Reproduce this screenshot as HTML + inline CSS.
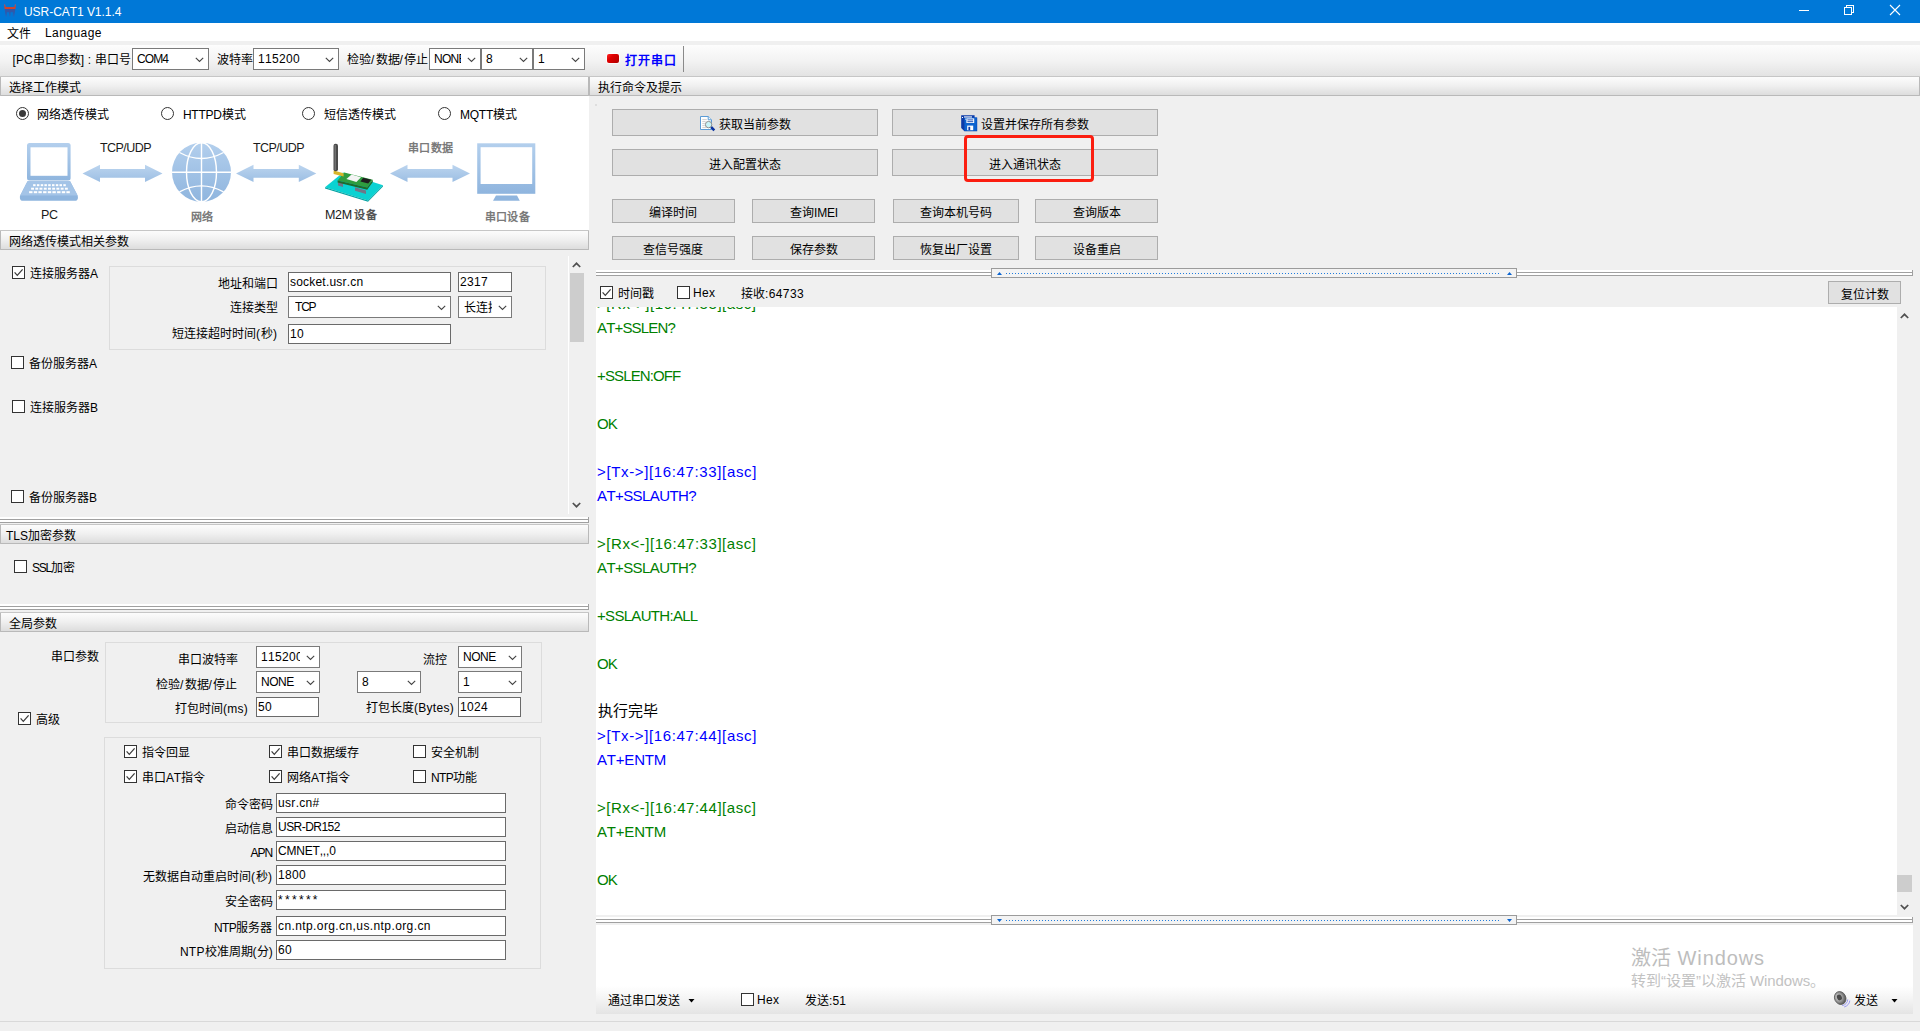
<!DOCTYPE html>
<html lang="zh-CN"><head><meta charset="utf-8"><title>USR-CAT1 V1.1.4</title>
<style>
html,body{margin:0;padding:0}
body{width:1920px;height:1031px;position:relative;overflow:hidden;background:#f0f0f0;
 font-family:"Liberation Sans",sans-serif;font-size:12px;color:#000;font-kerning:none}
body div,body svg{position:absolute;box-sizing:border-box}
.t{white-space:nowrap;overflow:visible}
.hd{height:20px;border:1px solid #b9b9b9;border-top-color:#c6c6c6;border-radius:1px;
 background:linear-gradient(#fcfcfc,#f1f1f1 45%,#dddddd)}
.cb{background:#fff;border:1px solid #7a7a7a;white-space:nowrap;overflow:hidden}
.cb .cv{right:4px;top:50%;margin-top:-2px}
.ct{position:absolute;top:0;bottom:0;overflow:hidden;white-space:nowrap}
.in{background:#fff;border:1px solid #6a6a6a;white-space:nowrap;overflow:hidden;padding-left:1px}
.ck{width:13px;height:13px;background:#fff;border:1px solid #333}
.ck svg{left:0;top:0}
.rd{width:13px;height:13px;border-radius:50%;background:#fff;border:1px solid #333}
.rd i{position:absolute;left:2px;top:2px;width:7px;height:7px;border-radius:50%;background:#3a3a3a}
.bt{background:#e1e1e1;border:1px solid #adadad}
.gp{border:1px solid #dcdcdc;background:#f0f0f0}
.sp{height:6px;background:#fff;border-right:1px solid #a0a0a0}
.sp:before{content:"";position:absolute;left:0;right:0;top:2px;height:1px;background:#a0a0a0}
.sp:after{content:"";position:absolute;left:0;right:0;top:5px;height:1px;background:#a0a0a0}
.log{font-size:15px}
.g{color:#008000}.b{color:#0000ff}
.im{font-size:11px;color:#7a7a7a;font-weight:bold}
.sb{background:#f0f0f0}
.th{background:#cdcdcd}
</style></head><body>

<div class="" style="left:0px;top:0px;width:1920px;height:23px;background:#0078d7"></div>
<svg style="left:0;top:0" width="20" height="20" viewBox="0 0 20 20">
<defs><linearGradient id="ir" x1="0" y1="0" x2="0" y2="1"><stop offset="0" stop-color="#8e5c86"/><stop offset="0.5" stop-color="#cf442e"/><stop offset="1" stop-color="#cd452f"/></linearGradient>
<linearGradient id="ib" x1="0" y1="0" x2="0" y2="1"><stop offset="0" stop-color="#3a55a0"/><stop offset="0.45" stop-color="#2a5bb0"/><stop offset="1" stop-color="#0c74d2"/></linearGradient></defs>
<path d="M4 4.3 Q4.6 4 5.2 4.4 L5.7 6.9 L14.3 6.9 L14.8 4.4 Q15.4 4 16 4.3 L15.4 9.1 L4.6 9.1 Z" fill="url(#ir)"/>
<path d="M4.7 9.1 L15.3 9.1 L14.3 17.4 L12.6 17.4 L12.9 12.2 L10.6 12.2 L10.5 16.8 L9.1 16.8 L9 12.2 L6.9 12.2 L7.2 17.4 L5.5 17.4 Z" fill="url(#ib)"/></svg>
<div class="t" style="left:24px;top:0px;height:24px;line-height:24px;color:#fff;letter-spacing:-0.05px">USR-CAT1 V1.1.4</div>
<svg style="left:1790px;top:0" width="130" height="23" viewBox="1790 0 130 23" shape-rendering="crispEdges">
<rect x="1799" y="10" width="10" height="1" fill="#fff"/>
<path d="M1844.5 7.5h7v7h-7z M1846.5 7.5v-2h7v7h-2" fill="none" stroke="#fff" stroke-width="1"/>
<path d="M1890 5 L1900 15 M1900 5 L1890 15" fill="none" stroke="#fff" stroke-width="1.1" shape-rendering="geometricPrecision"/>
</svg>
<div class="" style="left:0px;top:23px;width:1920px;height:18px;background:#fff"></div>
<div class="t" style="left:7px;top:27px;height:14px;line-height:14px;width:24px;text-align:justify;text-align-last:justify;">文件</div>
<div class="t" style="left:45px;top:26px;height:14px;line-height:14px;letter-spacing:0.45px">Language</div>
<div class="" style="left:0px;top:45px;width:1920px;height:31px;background:linear-gradient(#fdfdfd,#f3f3f3 50%,#e3e3e3)"></div>
<div class="t" style="left:12.5px;top:53px;height:14px;line-height:14px;width:118px;text-align:justify;text-align-last:justify;"><span style="letter-spacing:0.09px">[PC</span>串口参数<span style="letter-spacing:0.09px">] : </span>串口号</div>
<div class="cb " style="left:132px;top:48px;width:77px;height:22px;line-height:20px"><span class="ct" style="left:4px;right:19px;letter-spacing:-0.9px;">COM4</span><svg class="cv" width="9" height="6" viewBox="0 0 9 6"><path d="M0.8 0.8 L4.5 4.5 L8.2 0.8" fill="none" stroke="#444" stroke-width="1.1"/></svg></div>
<div class="t" style="left:217px;top:53px;height:14px;line-height:14px;width:36px;text-align:justify;text-align-last:justify;">波特率</div>
<div class="cb " style="left:253px;top:48px;width:86px;height:22px;line-height:20px"><span class="ct" style="left:4px;right:19px;letter-spacing:0.33px;">115200</span><svg class="cv" width="9" height="6" viewBox="0 0 9 6"><path d="M0.8 0.8 L4.5 4.5 L8.2 0.8" fill="none" stroke="#444" stroke-width="1.1"/></svg></div>
<div class="t" style="left:347px;top:53px;height:14px;line-height:14px;width:81px;text-align:justify;text-align-last:justify;">检验<span style="letter-spacing:1.17px">/</span>数据<span style="letter-spacing:1.17px">/</span>停止</div>
<div class="cb " style="left:429px;top:48px;width:52px;height:22px;line-height:20px"><span class="ct" style="left:4px;right:19px;letter-spacing:-0.7px;">NONE</span><svg class="cv" width="9" height="6" viewBox="0 0 9 6"><path d="M0.8 0.8 L4.5 4.5 L8.2 0.8" fill="none" stroke="#444" stroke-width="1.1"/></svg></div>
<div class="cb " style="left:481px;top:48px;width:52px;height:22px;line-height:20px"><span class="ct" style="left:4px;right:19px;">8</span><svg class="cv" width="9" height="6" viewBox="0 0 9 6"><path d="M0.8 0.8 L4.5 4.5 L8.2 0.8" fill="none" stroke="#444" stroke-width="1.1"/></svg></div>
<div class="cb " style="left:533px;top:48px;width:52px;height:22px;line-height:20px"><span class="ct" style="left:4px;right:19px;">1</span><svg class="cv" width="9" height="6" viewBox="0 0 9 6"><path d="M0.8 0.8 L4.5 4.5 L8.2 0.8" fill="none" stroke="#444" stroke-width="1.1"/></svg></div>
<div class="" style="left:607px;top:54px;width:12px;height:9px;border-radius:2px;background:linear-gradient(135deg,#ff2a2a 0%,#e00000 35%,#b00000 100%);box-shadow:0 0 0 1px rgba(255,255,255,.7)"></div>
<div class="t" style="left:625px;top:54px;height:14px;line-height:14px;width:51px;text-align:justify;text-align-last:justify;color:#0000ff;font-weight:bold">打开串口</div>
<div class="" style="left:683px;top:46px;width:1px;height:26px;background:#8a8a8a"></div>
<div class="hd" style="left:0px;top:76px;width:589px"></div>
<div class="t" style="left:9px;top:81px;height:14px;line-height:14px;width:72px;text-align:justify;text-align-last:justify;">选择工作模式</div>
<div class="hd" style="left:589px;top:76px;width:1331px"></div>
<div class="t" style="left:598px;top:81px;height:14px;line-height:14px;width:84px;text-align:justify;text-align-last:justify;">执行命令及提示</div>
<div class="hd" style="left:0px;top:230px;width:589px"></div>
<div class="t" style="left:9px;top:235px;height:14px;line-height:14px;width:120px;text-align:justify;text-align-last:justify;">网络透传模式相关参数</div>
<div class="hd" style="left:0px;top:524px;width:589px"></div>
<div class="t" style="left:6px;top:529px;height:14px;line-height:14px;">TLS加密参数</div>
<div class="hd" style="left:0px;top:612px;width:589px"></div>
<div class="t" style="left:9px;top:617px;height:14px;line-height:14px;width:48px;text-align:justify;text-align-last:justify;">全局参数</div>
<div class="" style="left:0px;top:96px;width:589px;height:134px;background:#fff"></div>
<div class="rd" style="left:16.0px;top:107.0px"><i></i></div>
<div class="t" style="left:37px;top:108px;height:14px;line-height:14px;width:72px;text-align:justify;text-align-last:justify;">网络透传模式</div>
<div class="rd" style="left:161.0px;top:107.0px"></div>
<div class="t" style="left:183px;top:108px;height:14px;line-height:14px;width:62.5px;text-align:justify;text-align-last:justify;"><span style="letter-spacing:-0.30px">HTTPD</span>模式</div>
<div class="rd" style="left:302.0px;top:107.0px"></div>
<div class="t" style="left:324px;top:108px;height:14px;line-height:14px;width:72px;text-align:justify;text-align-last:justify;">短信透传模式</div>
<div class="rd" style="left:438.0px;top:107.0px"></div>
<div class="t" style="left:460px;top:108px;height:14px;line-height:14px;width:57px;text-align:justify;text-align-last:justify;"><span style="letter-spacing:-0.25px">MQTT</span>模式</div>
<svg style="left:0;top:96px" width="589" height="134" viewBox="0 96 589 134">
<defs>
<linearGradient id="ab" x1="0" y1="0" x2="0" y2="1"><stop offset="0" stop-color="#bcd5ef"/><stop offset="1" stop-color="#9cbee3"/></linearGradient>
<linearGradient id="lb" x1="0" y1="0" x2="0" y2="1"><stop offset="0" stop-color="#b3cfed"/><stop offset="1" stop-color="#8fb5de"/></linearGradient>
</defs>
<rect x="27" y="143" width="43.6" height="37.4" rx="2.5" fill="url(#lb)"/>
<rect x="30.5" y="147.3" width="37" height="28.5" fill="#fff"/>
<path d="M27.5 181.2 L70.1 181.2 L77.6 195.6 Q78.2 197 77.8 198.4 L77.2 200 Q76.8 200.8 75.8 200.8 L22 200.8 Q21 200.8 20.6 200 L20 198.4 Q19.6 197 20.2 195.6 Z" fill="#8fb5de"/>
<path d="M27.5 181.2 L70.1 181.2 L77.6 195.6 L20.2 195.6 Z" fill="#a4c4e7"/>
<rect x="33.1" y="184.2" width="2.5" height="2" fill="#fff"/><rect x="36.9" y="184.2" width="2.5" height="2" fill="#fff"/><rect x="40.7" y="184.2" width="2.5" height="2" fill="#fff"/><rect x="44.4" y="184.2" width="2.5" height="2" fill="#fff"/><rect x="48.2" y="184.2" width="2.5" height="2" fill="#fff"/><rect x="52.0" y="184.2" width="2.5" height="2" fill="#fff"/><rect x="55.8" y="184.2" width="2.5" height="2" fill="#fff"/><rect x="59.5" y="184.2" width="2.5" height="2" fill="#fff"/><rect x="63.3" y="184.2" width="2.5" height="2" fill="#fff"/><rect x="31.1" y="187.7" width="2.9" height="2" fill="#fff"/><rect x="35.3" y="187.7" width="2.9" height="2" fill="#fff"/><rect x="39.5" y="187.7" width="2.9" height="2" fill="#fff"/><rect x="43.8" y="187.7" width="2.9" height="2" fill="#fff"/><rect x="48.0" y="187.7" width="2.9" height="2" fill="#fff"/><rect x="52.2" y="187.7" width="2.9" height="2" fill="#fff"/><rect x="56.4" y="187.7" width="2.9" height="2" fill="#fff"/><rect x="60.7" y="187.7" width="2.9" height="2" fill="#fff"/><rect x="64.9" y="187.7" width="2.9" height="2" fill="#fff"/><rect x="29.1" y="191.2" width="3.4" height="2" fill="#fff"/><rect x="33.8" y="191.2" width="3.4" height="2" fill="#fff"/><rect x="38.4" y="191.2" width="3.4" height="2" fill="#fff"/><rect x="43.1" y="191.2" width="3.4" height="2" fill="#fff"/><rect x="47.8" y="191.2" width="3.4" height="2" fill="#fff"/><rect x="52.4" y="191.2" width="3.4" height="2" fill="#fff"/><rect x="57.1" y="191.2" width="3.4" height="2" fill="#fff"/><rect x="61.8" y="191.2" width="3.4" height="2" fill="#fff"/><rect x="66.4" y="191.2" width="3.4" height="2" fill="#fff"/>
<path d="M82.5 173.4 L100.0 164.70000000000002 L100.0 169.1 L145.0 169.1 L145.0 164.70000000000002 L162.5 173.4 L145.0 182.1 L145.0 177.70000000000002 L100.0 177.70000000000002 L100.0 182.1 Z" fill="url(#ab)"/><path d="M236 173.4 L253.5 164.70000000000002 L253.5 169.1 L298.8 169.1 L298.8 164.70000000000002 L316.3 173.4 L298.8 182.1 L298.8 177.70000000000002 L253.5 177.70000000000002 L253.5 182.1 Z" fill="url(#ab)"/><path d="M390 173.4 L407.5 164.70000000000002 L407.5 169.1 L452.5 169.1 L452.5 164.70000000000002 L470 173.4 L452.5 182.1 L452.5 177.70000000000002 L407.5 177.70000000000002 L407.5 182.1 Z" fill="url(#ab)"/>
<circle cx="201.5" cy="172.2" r="29.5" fill="url(#lb)"/>
<g fill="none" stroke="#fff" stroke-width="1.4">
<ellipse cx="201.5" cy="172.2" rx="15" ry="29.5"/>
<path d="M201.5 142.7 V201.7 M172 172.2 H231"/>
<path d="M179.5 152.5 Q201.5 164.5 223.5 152.5 M179.5 191.9 Q201.5 179.9 223.5 191.9"/>
</g>
<path d="M325 187.2 L343 172.4 L383 185.2 L368 200.4 Z" fill="#0ad2d2"/>
<path d="M325 187.2 L368 200.4 L383 185.2 L383 186.6 L368 201.8 L325 188.6 Z" fill="#06a3a3"/>
<path d="M338 181.6 L343 183 L343 187 L338 185.6 Z M355 187.2 L366 190.4 L366 194 L355 190.8 Z" fill="#6f7687"/>
<path d="M337.6 180.4 L344.2 172.6 L372.8 179.8 L367.2 187.6 Z" fill="#2f9d3f"/>
<path d="M337.6 180.4 L367.2 187.6 L372.8 179.8 L372.8 182 L367.2 189.8 L337.6 182.6 Z" fill="#1d6b2c"/>
<path d="M346.4 179 L351.6 174.6 L361 177.2 L356.4 182 Z" fill="#f4f4f4"/>
<path d="M360.4 181.4 L363.2 177.8 L371.2 179.8 L368.2 183.6 Z" fill="#1e1e1e"/>
<path d="M333.6 170.6 L343.6 173.2 L343.6 176.6 L333.6 174 Z" fill="#d8b62a"/>
<rect x="333.5" y="143.8" width="4.5" height="27.4" rx="2" fill="#4a4a4a"/>
<rect x="334.6" y="145" width="1.2" height="25" fill="#7c7c7c"/>
<rect x="477.2" y="143.3" width="58.1" height="50.5" fill="url(#lb)"/>
<rect x="480.6" y="147.2" width="51.6" height="36.8" fill="#fff"/>
<path d="M496 195.6 L517 195.6 L519.8 200.8 L493 200.8 Z" fill="#8fb5de"/>
</svg>
<div class="t" style="left:41px;top:207.5px;height:14px;line-height:14px;color:#1a1a1a;font-size:12.5px;letter-spacing:-0.3px">PC</div>
<div class="t" style="left:100px;top:140.5px;height:14px;line-height:14px;color:#1a1a1a;font-size:12.5px;letter-spacing:-0.55px">TCP/UDP</div>
<div class="t" style="left:253px;top:140.5px;height:14px;line-height:14px;color:#1a1a1a;font-size:12.5px;letter-spacing:-0.55px">TCP/UDP</div>
<div class="t im" style="left:190.5px;top:210px;height:14px;line-height:14px;width:22px;text-align:justify;text-align-last:justify;">网络</div>
<div class="t" style="left:325px;top:207.5px;height:14px;line-height:14px;color:#1a1a1a;font-size:12.5px;letter-spacing:-0.3px">M2M</div>
<div class="t im" style="left:353.5px;top:208px;height:14px;line-height:14px;width:23px;text-align:justify;text-align-last:justify;color:#555">设备</div>
<div class="t im" style="left:408px;top:141px;height:14px;line-height:14px;width:45px;text-align:justify;text-align-last:justify;">串口数据</div>
<div class="t im" style="left:484.5px;top:210px;height:14px;line-height:14px;width:45px;text-align:justify;text-align-last:justify;">串口设备</div>
<div class="ck" style="left:12px;top:266px"><svg width="11" height="11" viewBox="0 0 11 11"><path d="M1.6 5.4 L4.3 8.4 L9.6 2.4" fill="none" stroke="#3c3c3c" stroke-width="1.25"/></svg></div>
<div class="t" style="left:30px;top:267px;height:14px;line-height:14px;width:68px;text-align:justify;text-align-last:justify;">连接服务器A</div>
<div class="ck" style="left:11px;top:356px"></div>
<div class="t" style="left:29px;top:357px;height:14px;line-height:14px;width:68px;text-align:justify;text-align-last:justify;">备份服务器A</div>
<div class="ck" style="left:12px;top:400px"></div>
<div class="t" style="left:30px;top:401px;height:14px;line-height:14px;width:67px;text-align:justify;text-align-last:justify;">连接服务器<span style="letter-spacing:-1.00px">B</span></div>
<div class="ck" style="left:11px;top:490px"></div>
<div class="t" style="left:29px;top:491px;height:14px;line-height:14px;width:67px;text-align:justify;text-align-last:justify;">备份服务器<span style="letter-spacing:-1.00px">B</span></div>
<div class="gp" style="left:109px;top:266px;width:437px;height:84px;"></div>
<div class="t" style="left:218px;top:277px;height:14px;line-height:14px;width:59px;text-align:justify;text-align-last:justify;">地址和端口</div>
<div class="t" style="left:230px;top:301px;height:14px;line-height:14px;width:48px;text-align:justify;text-align-last:justify;">连接类型</div>
<div class="t" style="left:172px;top:327px;height:14px;line-height:14px;width:106px;text-align:justify;text-align-last:justify;">短连接超时时间<span style="letter-spacing:1.00px">(</span>秒<span style="letter-spacing:1.00px">)</span></div>
<div class="in" style="left:288px;top:272px;width:163px;height:20px;line-height:18px;letter-spacing:0.2px;">socket.usr.cn</div>
<div class="in" style="left:458px;top:272px;width:54px;height:20px;line-height:18px;letter-spacing:0.33px;">2317</div>
<div class="cb " style="left:288px;top:296px;width:163px;height:22px;line-height:20px"><span class="ct" style="left:6px;right:19px;letter-spacing:-1.2px;">TCP</span><svg class="cv" width="9" height="6" viewBox="0 0 9 6"><path d="M0.8 0.8 L4.5 4.5 L8.2 0.8" fill="none" stroke="#444" stroke-width="1.1"/></svg></div>
<div class="cb " style="left:458px;top:296px;width:54px;height:22px;line-height:20px"><span class="ct" style="left:5px;right:19px;"><span style="position:relative;top:1px">长连接</span></span><svg class="cv" width="9" height="6" viewBox="0 0 9 6"><path d="M0.8 0.8 L4.5 4.5 L8.2 0.8" fill="none" stroke="#444" stroke-width="1.1"/></svg></div>
<div class="in" style="left:288px;top:324px;width:163px;height:20px;line-height:18px;letter-spacing:0.33px;">10</div>
<div class="" style="left:568px;top:256px;width:1px;height:258px;background:#fff"></div>
<div class="th" style="left:570px;top:273px;width:14px;height:69px;"></div>
<svg style="left:572px;top:262px" width="9" height="6" viewBox="0 0 9 6"><path d="M0.8 5 L4.5 1.3 L8.2 5" fill="none" stroke="#505050" stroke-width="1.7"/></svg>
<svg style="left:572px;top:502px" width="9" height="6" viewBox="0 0 9 6"><path d="M0.8 1 L4.5 4.7 L8.2 1" fill="none" stroke="#505050" stroke-width="1.7"/></svg>
<div class="sp" style="left:0px;top:517px;width:589px"><b></b></div>
<div class="ck" style="left:14px;top:560px"></div>
<div class="t" style="left:32px;top:561px;height:14px;line-height:14px;width:43px;text-align:justify;text-align-last:justify;"><span style="letter-spacing:-1.23px">SSL</span>加密</div>
<div class="sp" style="left:0px;top:604px;width:589px"><b></b></div>
<div class="t" style="left:51px;top:650px;height:14px;line-height:14px;width:47px;text-align:justify;text-align-last:justify;">串口参数</div>
<div class="gp" style="left:105px;top:642px;width:437px;height:81px;"></div>
<div class="t" style="left:178px;top:653px;height:14px;line-height:14px;width:59px;text-align:justify;text-align-last:justify;">串口波特率</div>
<div class="t" style="left:156px;top:678px;height:14px;line-height:14px;width:81px;text-align:justify;text-align-last:justify;">检验<span style="letter-spacing:1.17px">/</span>数据<span style="letter-spacing:1.17px">/</span>停止</div>
<div class="t" style="left:175px;top:702px;height:14px;line-height:14px;width:73px;text-align:justify;text-align-last:justify;">打包时间<span style="letter-spacing:0.25px">(ms)</span></div>
<div class="cb " style="left:256px;top:646px;width:64px;height:22px;line-height:20px"><span class="ct" style="left:4px;right:19px;letter-spacing:0.33px;">115200</span><svg class="cv" width="9" height="6" viewBox="0 0 9 6"><path d="M0.8 0.8 L4.5 4.5 L8.2 0.8" fill="none" stroke="#444" stroke-width="1.1"/></svg></div>
<div class="cb " style="left:256px;top:671px;width:64px;height:22px;line-height:20px"><span class="ct" style="left:4px;right:19px;letter-spacing:-0.5px;">NONE</span><svg class="cv" width="9" height="6" viewBox="0 0 9 6"><path d="M0.8 0.8 L4.5 4.5 L8.2 0.8" fill="none" stroke="#444" stroke-width="1.1"/></svg></div>
<div class="in" style="left:256px;top:697px;width:63px;height:20px;line-height:18px;letter-spacing:0.33px;">50</div>
<div class="t" style="left:423px;top:653px;height:14px;line-height:14px;width:23px;text-align:justify;text-align-last:justify;">流控</div>
<div class="cb " style="left:458px;top:646px;width:64px;height:22px;line-height:20px"><span class="ct" style="left:4px;right:19px;letter-spacing:-0.5px;">NONE</span><svg class="cv" width="9" height="6" viewBox="0 0 9 6"><path d="M0.8 0.8 L4.5 4.5 L8.2 0.8" fill="none" stroke="#444" stroke-width="1.1"/></svg></div>
<div class="cb " style="left:357px;top:671px;width:64px;height:22px;line-height:20px"><span class="ct" style="left:4px;right:19px;">8</span><svg class="cv" width="9" height="6" viewBox="0 0 9 6"><path d="M0.8 0.8 L4.5 4.5 L8.2 0.8" fill="none" stroke="#444" stroke-width="1.1"/></svg></div>
<div class="cb " style="left:458px;top:671px;width:64px;height:22px;line-height:20px"><span class="ct" style="left:4px;right:19px;">1</span><svg class="cv" width="9" height="6" viewBox="0 0 9 6"><path d="M0.8 0.8 L4.5 4.5 L8.2 0.8" fill="none" stroke="#444" stroke-width="1.1"/></svg></div>
<div class="t" style="left:366px;top:701px;height:14px;line-height:14px;width:88px;text-align:justify;text-align-last:justify;">打包长度<span style="letter-spacing:0.28px">(Bytes)</span></div>
<div class="in" style="left:458px;top:697px;width:63px;height:20px;line-height:18px;letter-spacing:0.33px;">1024</div>
<div class="ck" style="left:18px;top:712px"><svg width="11" height="11" viewBox="0 0 11 11"><path d="M1.6 5.4 L4.3 8.4 L9.6 2.4" fill="none" stroke="#3c3c3c" stroke-width="1.25"/></svg></div>
<div class="t" style="left:36px;top:713px;height:14px;line-height:14px;width:23px;text-align:justify;text-align-last:justify;">高级</div>
<div class="gp" style="left:104px;top:737px;width:437px;height:232px;"></div>
<div class="ck" style="left:124px;top:745px"><svg width="11" height="11" viewBox="0 0 11 11"><path d="M1.6 5.4 L4.3 8.4 L9.6 2.4" fill="none" stroke="#3c3c3c" stroke-width="1.25"/></svg></div>
<div class="t" style="left:142px;top:746px;height:14px;line-height:14px;width:47px;text-align:justify;text-align-last:justify;">指令回显</div>
<div class="ck" style="left:269px;top:745px"><svg width="11" height="11" viewBox="0 0 11 11"><path d="M1.6 5.4 L4.3 8.4 L9.6 2.4" fill="none" stroke="#3c3c3c" stroke-width="1.25"/></svg></div>
<div class="t" style="left:287px;top:746px;height:14px;line-height:14px;width:71px;text-align:justify;text-align-last:justify;">串口数据缓存</div>
<div class="ck" style="left:413px;top:745px"></div>
<div class="t" style="left:431px;top:746px;height:14px;line-height:14px;width:47px;text-align:justify;text-align-last:justify;">安全机制</div>
<div class="ck" style="left:124px;top:770px"><svg width="11" height="11" viewBox="0 0 11 11"><path d="M1.6 5.4 L4.3 8.4 L9.6 2.4" fill="none" stroke="#3c3c3c" stroke-width="1.25"/></svg></div>
<div class="t" style="left:142px;top:771px;height:14px;line-height:14px;width:63px;text-align:justify;text-align-last:justify;">串口<span style="letter-spacing:-0.17px">AT</span>指令</div>
<div class="ck" style="left:269px;top:770px"><svg width="11" height="11" viewBox="0 0 11 11"><path d="M1.6 5.4 L4.3 8.4 L9.6 2.4" fill="none" stroke="#3c3c3c" stroke-width="1.25"/></svg></div>
<div class="t" style="left:287px;top:771px;height:14px;line-height:14px;width:63px;text-align:justify;text-align-last:justify;">网络<span style="letter-spacing:-0.17px">AT</span>指令</div>
<div class="ck" style="left:413px;top:770px"></div>
<div class="t" style="left:431px;top:771px;height:14px;line-height:14px;width:46px;text-align:justify;text-align-last:justify;"><span style="letter-spacing:-0.67px">NTP</span>功能</div>
<div class="t" style="left:225px;top:798px;height:14px;line-height:14px;width:47px;text-align:justify;text-align-last:justify;">命令密码</div>
<div class="in" style="left:276px;top:793px;width:230px;height:20px;line-height:18px;letter-spacing:0.32px;">usr.cn#</div>
<div class="t" style="left:225px;top:822px;height:14px;line-height:14px;width:47px;text-align:justify;text-align-last:justify;">启动信息</div>
<div class="in" style="left:276px;top:817px;width:230px;height:20px;line-height:18px;letter-spacing:-0.54px;">USR-DR152</div>
<div class="t" style="left:250.5px;top:846px;height:14px;line-height:14px;width:21.5px;text-align:right;"><span style="letter-spacing:-1.06px">APN</span></div>
<div class="in" style="left:276px;top:841px;width:230px;height:20px;line-height:18px;letter-spacing:-0.19px;">CMNET,,,0</div>
<div class="t" style="left:143px;top:870px;height:14px;line-height:14px;width:130px;text-align:justify;text-align-last:justify;">无数据自动重启时间<span style="letter-spacing:1.00px">(</span>秒<span style="letter-spacing:1.00px">)</span></div>
<div class="in" style="left:276px;top:865px;width:230px;height:20px;line-height:18px;letter-spacing:0.33px;">1800</div>
<div class="t" style="left:225px;top:895px;height:14px;line-height:14px;width:47px;text-align:justify;text-align-last:justify;">安全密码</div>
<div class="in" style="left:276px;top:890px;width:230px;height:20px;line-height:18px;letter-spacing:2.3px;">******</div>
<div class="t" style="left:214px;top:921px;height:14px;line-height:14px;width:58px;text-align:justify;text-align-last:justify;"><span style="letter-spacing:-0.67px">NTP</span>服务器</div>
<div class="in" style="left:276px;top:916px;width:230px;height:20px;line-height:18px;letter-spacing:0.4px;">cn.ntp.org.cn,us.ntp.org.cn</div>
<div class="t" style="left:180px;top:945px;height:14px;line-height:14px;width:93px;text-align:justify;text-align-last:justify;"><span style="letter-spacing:0.20px">NTP</span>校准周期<span style="letter-spacing:0.20px">(</span>分<span style="letter-spacing:0.20px">)</span></div>
<div class="in" style="left:276px;top:940px;width:230px;height:20px;line-height:18px;letter-spacing:0.33px;">60</div>
<div class="bt" style="left:612px;top:109px;width:266px;height:27px"></div>
<div class="t" style="left:719px;top:118px;height:14px;line-height:14px;width:72px;text-align:justify;text-align-last:justify;">获取当前参数</div>
<svg style="left:699px;top:115px" width="17" height="17" viewBox="0 0 17 17">
<path d="M1.5 1.5 H9.2 L12.5 4.8 V14.5 H1.5 Z" fill="#fff" stroke="#5b9bd5" stroke-width="1"/>
<path d="M9.2 1.5 V4.8 H12.5" fill="#eaf3fb" stroke="#5b9bd5" stroke-width="1"/>
<path d="M3.3 4.6 H7.8 M3.3 6.6 H6.6 M3.3 8.6 H5.8 M3.3 10.6 H5.8 M3.3 12.6 H7" stroke="#c9c9c9" stroke-width="0.9"/>
<circle cx="9.6" cy="9.6" r="3.2" fill="#c9f4f8" stroke="#8c8c8c" stroke-width="1"/>
<path d="M12.2 12.2 L15.3 15.3" stroke="#0a32a0" stroke-width="2.6"/>
</svg>
<div class="bt" style="left:892px;top:109px;width:266px;height:27px"></div>
<div class="t" style="left:981px;top:118px;height:14px;line-height:14px;width:108px;text-align:justify;text-align-last:justify;">设置并保存所有参数</div>
<svg style="left:961px;top:115px" width="17" height="17" viewBox="0 0 17 17">
<path d="M0.2 0.2 H13.6 V2.4 H16.2 V16.2 H3.4 L0.2 13 Z" fill="#0a3aa8"/>
<rect x="3.4" y="2.6" width="12.4" height="13.2" fill="#0d63cf"/>
<rect x="3" y="1.4" width="8" height="1.1" fill="#fff"/>
<rect x="5.4" y="3.4" width="7.8" height="4.6" fill="#fff"/>
<path d="M6.4 4.9 H12.2 M6.4 6.7 H12.2" stroke="#0a3aa8" stroke-width="0.9"/>
<rect x="6.2" y="10.6" width="6" height="4.6" fill="#fff"/>
<rect x="7.4" y="11.8" width="1.8" height="3.4" fill="#0a3aa8"/>
<rect x="1" y="2" width="1" height="1" fill="#fff"/><rect x="4.2" y="3.6" width="1" height="1" fill="#fff"/>
</svg>
<div class="bt" style="left:612px;top:149px;width:266px;height:27px"></div>
<div class="t" style="left:709px;top:158px;height:14px;line-height:14px;width:72px;text-align:justify;text-align-last:justify;">进入配置状态</div>
<div class="bt" style="left:892px;top:149px;width:266px;height:27px"></div>
<div class="t" style="left:989px;top:158px;height:14px;line-height:14px;width:72px;text-align:justify;text-align-last:justify;">进入通讯状态</div>
<div class="" style="left:964px;top:135px;width:130px;height:47px;border:3px solid #fb1e10;border-radius:4px"></div>
<div class="bt" style="left:612px;top:199px;width:123px;height:24px"></div>
<div class="t" style="left:649px;top:206px;height:14px;line-height:14px;width:48px;text-align:justify;text-align-last:justify;">编译时间</div>
<div class="bt" style="left:752px;top:199px;width:123px;height:24px"></div>
<div class="t" style="left:790px;top:206px;height:14px;line-height:14px;width:48px;text-align:justify;text-align-last:justify;">查询<span style="letter-spacing:-0.17px">IMEI</span></div>
<div class="bt" style="left:893px;top:199px;width:126px;height:24px"></div>
<div class="t" style="left:920px;top:206px;height:14px;line-height:14px;width:72px;text-align:justify;text-align-last:justify;">查询本机号码</div>
<div class="bt" style="left:1035px;top:199px;width:123px;height:24px"></div>
<div class="t" style="left:1073px;top:206px;height:14px;line-height:14px;width:48px;text-align:justify;text-align-last:justify;">查询版本</div>
<div class="bt" style="left:612px;top:236px;width:123px;height:24px"></div>
<div class="t" style="left:643px;top:243px;height:14px;line-height:14px;width:60px;text-align:justify;text-align-last:justify;">查信号强度</div>
<div class="bt" style="left:752px;top:236px;width:123px;height:24px"></div>
<div class="t" style="left:790px;top:243px;height:14px;line-height:14px;width:48px;text-align:justify;text-align-last:justify;">保存参数</div>
<div class="bt" style="left:893px;top:236px;width:126px;height:24px"></div>
<div class="t" style="left:920px;top:243px;height:14px;line-height:14px;width:72px;text-align:justify;text-align-last:justify;">恢复出厂设置</div>
<div class="bt" style="left:1035px;top:236px;width:123px;height:24px"></div>
<div class="t" style="left:1073px;top:243px;height:14px;line-height:14px;width:48px;text-align:justify;text-align-last:justify;">设备重启</div>
<div class="sp" style="left:596px;top:270px;width:1317px"><b></b></div>
<svg style="left:991px;top:268px" width="526" height="10" viewBox="0 0 526 10">
<rect x="0.5" y="0.5" width="525" height="9" fill="#f3f3f3" stroke="#9b9b9b"/>
<path d="M6 7 L8.5 4 L11 7 Z M516 7 L518.5 4 L521 7 Z" fill="#0a64d0"/>
<path d="M15 5.5 H508" stroke="#1f7bdc" stroke-width="1" stroke-dasharray="1 2"/>
</svg>
<div class="ck" style="left:600px;top:286px"><svg width="11" height="11" viewBox="0 0 11 11"><path d="M1.6 5.4 L4.3 8.4 L9.6 2.4" fill="none" stroke="#3c3c3c" stroke-width="1.25"/></svg></div>
<div class="t" style="left:618px;top:287px;height:14px;line-height:14px;width:35px;text-align:justify;text-align-last:justify;">时间戳</div>
<div class="ck" style="left:677px;top:286px"></div>
<div class="t" style="left:693px;top:286px;height:14px;line-height:14px;letter-spacing:0.3px">Hex</div>
<div class="t" style="left:741px;top:287px;height:14px;line-height:14px;width:63px;text-align:justify;text-align-last:justify;">接收<span style="letter-spacing:0.38px">:64733</span></div>
<div class="bt" style="left:1828px;top:281px;width:73px;height:23px"></div>
<div class="t" style="left:1841px;top:288px;height:14px;line-height:14px;width:47px;text-align:justify;text-align-last:justify;">复位计数</div>
<div class="" style="left:595px;top:104px;width:2px;height:2px;background:#d9d9d9;border-radius:1px"></div>
<div class="" style="left:596px;top:307px;width:1301px;height:608px;background:#fff"></div>
<div class="sb" style="left:1897px;top:307px;width:16px;height:608px;"></div>
<div class="th" style="left:1897px;top:875px;width:15px;height:17px;"></div>
<svg style="left:1900px;top:313px" width="9" height="6" viewBox="0 0 9 6"><path d="M0.8 5 L4.5 1.3 L8.2 5" fill="none" stroke="#505050" stroke-width="1.7"/></svg>
<svg style="left:1900px;top:904px" width="9" height="6" viewBox="0 0 9 6"><path d="M0.8 1 L4.5 4.7 L8.2 1" fill="none" stroke="#505050" stroke-width="1.7"/></svg>
<div style="left:596px;top:307px;width:1301px;height:608px;overflow:hidden">
<div class="t log g" style="left:1px;top:-15px;height:24px;line-height:24px;letter-spacing:0.54px">&gt;[Rx&lt;-][16:47:33][asc]</div>
<div class="t log g" style="left:1px;top:9px;height:24px;line-height:24px;letter-spacing:-0.83px">AT+SSLEN?</div>
<div class="t log g" style="left:1px;top:57px;height:24px;line-height:24px;letter-spacing:-0.87px">+SSLEN:OFF</div>
<div class="t log g" style="left:1px;top:105px;height:24px;line-height:24px;letter-spacing:-0.84px">OK</div>
<div class="t log b" style="left:1px;top:153px;height:24px;line-height:24px;letter-spacing:0.64px">&gt;[Tx-&gt;][16:47:33][asc]</div>
<div class="t log b" style="left:1px;top:177px;height:24px;line-height:24px;letter-spacing:-0.59px">AT+SSLAUTH?</div>
<div class="t log g" style="left:1px;top:225px;height:24px;line-height:24px;letter-spacing:0.54px">&gt;[Rx&lt;-][16:47:33][asc]</div>
<div class="t log g" style="left:1px;top:249px;height:24px;line-height:24px;letter-spacing:-0.59px">AT+SSLAUTH?</div>
<div class="t log g" style="left:1px;top:297px;height:24px;line-height:24px;letter-spacing:-0.69px">+SSLAUTH:ALL</div>
<div class="t log g" style="left:1px;top:345px;height:24px;line-height:24px;letter-spacing:-0.84px">OK</div>
<div class="t" style="left:1.5px;top:392px;height:24px;line-height:24px;width:59px;font-size:15px;text-align:justify;text-align-last:justify">执行完毕</div>
<div class="t log b" style="left:1px;top:417px;height:24px;line-height:24px;letter-spacing:0.64px">&gt;[Tx-&gt;][16:47:44][asc]</div>
<div class="t log b" style="left:1px;top:441px;height:24px;line-height:24px;letter-spacing:-0.2px">AT+ENTM</div>
<div class="t log g" style="left:1px;top:489px;height:24px;line-height:24px;letter-spacing:0.54px">&gt;[Rx&lt;-][16:47:44][asc]</div>
<div class="t log g" style="left:1px;top:513px;height:24px;line-height:24px;letter-spacing:-0.2px">AT+ENTM</div>
<div class="t log g" style="left:1px;top:561px;height:24px;line-height:24px;letter-spacing:-0.84px">OK</div>
</div>
<div class="sp" style="left:596px;top:917px;width:1317px"><b></b></div>
<svg style="left:991px;top:915px" width="526" height="10" viewBox="0 0 526 10">
<rect x="0.5" y="0.5" width="525" height="9" fill="#f3f3f3" stroke="#9b9b9b"/>
<path d="M6 4 L8.5 7 L11 4 Z M516 4 L518.5 7 L521 4 Z" fill="#0a64d0"/>
<path d="M15 5.5 H508" stroke="#1f7bdc" stroke-width="1" stroke-dasharray="1 2"/>
</svg>
<div class="" style="left:596px;top:925px;width:1317px;height:62px;background:#fff"></div>
<div class="" style="left:596px;top:986px;width:1317px;height:28px;background:linear-gradient(#ffffff,#f4f4f4 45%,#e4e4e4)"></div>
<div class="t" style="left:608px;top:994px;height:14px;line-height:14px;width:72px;text-align:justify;text-align-last:justify;">通过串口发送</div>
<svg style="left:688px;top:999px" width="7" height="4" viewBox="0 0 7 4"><path d="M0.5 0 H6.5 L3.5 3.6 Z" fill="#000"/></svg>
<div class="ck" style="left:741px;top:993px"></div>
<div class="t" style="left:757px;top:993px;height:14px;line-height:14px;letter-spacing:0.3px">Hex</div>
<div class="t" style="left:805px;top:994px;height:14px;line-height:14px;width:41px;text-align:justify;text-align-last:justify;">发送<span style="letter-spacing:0.11px">:51</span></div>
<svg style="left:1833px;top:990px" width="18" height="18" viewBox="0 0 18 18">
<defs><radialGradient id="spk" cx="0.4" cy="0.4" r="0.7"><stop offset="0" stop-color="#e9e9e9"/><stop offset="0.55" stop-color="#8d8d8d"/><stop offset="1" stop-color="#3c3c3c"/></radialGradient></defs>
<ellipse cx="7.2" cy="8" rx="5.6" ry="6.6" transform="rotate(-25 7.2 8)" fill="url(#spk)" stroke="#5a5a5a" stroke-width="0.8"/>
<ellipse cx="6.4" cy="7.4" rx="2.4" ry="3" transform="rotate(-25 6.4 7.4)" fill="#4a4a4a"/>
<path d="M9.2 15.6 Q14.2 14.6 14.8 9.4 M11.2 17 Q16.4 15.2 16.8 10.6" fill="none" stroke="#8f8df0" stroke-width="0.9"/>
</svg>
<div class="t" style="left:1854px;top:994px;height:14px;line-height:14px;width:23px;text-align:justify;text-align-last:justify;">发送</div>
<svg style="left:1891px;top:999px" width="7" height="4" viewBox="0 0 7 4"><path d="M0.5 0 H6.5 L3.5 3.6 Z" fill="#000"/></svg>
<div class="t" style="left:1631px;top:945px;height:26px;line-height:26px;width:134px;text-align:justify;text-align-last:justify;font-size:20px;color:#bdbdbd">激活<span style="letter-spacing:0.91px"> Windows</span></div>
<div class="t" style="left:1631px;top:971px;height:20px;line-height:20px;width:194px;text-align:justify;text-align-last:justify;font-size:15px;color:#c2c2c2">转到<span style="letter-spacing:-0.10px">“</span>设置<span style="letter-spacing:-0.10px">”</span>以激活<span style="letter-spacing:-0.10px"> Windows</span>。</div>
<div class="" style="left:0px;top:1021px;width:1920px;height:1px;background:#d9d9d9"></div>
</body></html>
